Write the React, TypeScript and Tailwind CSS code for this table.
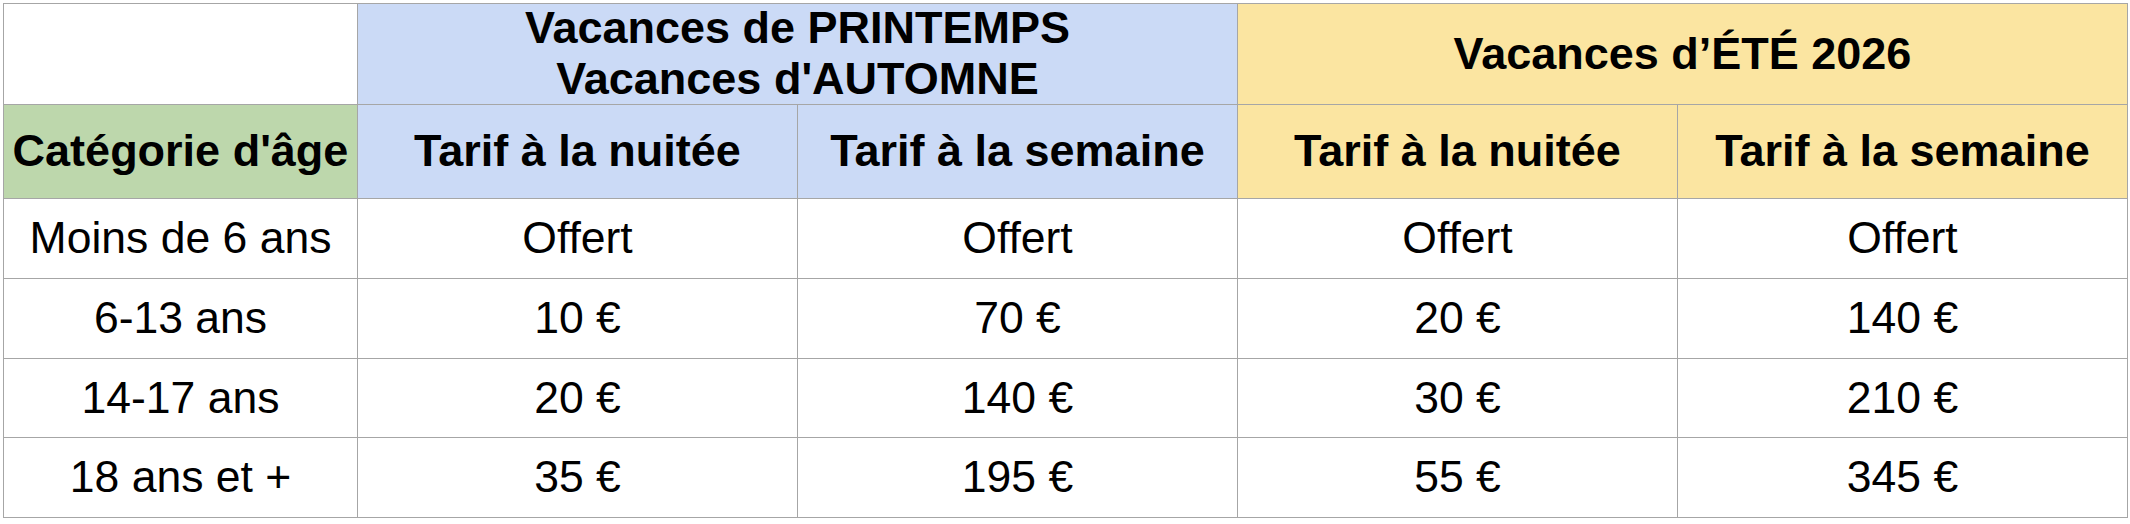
import React from "react";

interface PriceRow {
  age: string;
  springNight: string;
  springWeek: string;
  summerNight: string;
  summerWeek: string;
}

const rows: PriceRow[] = [
  { age: "Moins de 6 ans", springNight: "Offert", springWeek: "Offert", summerNight: "Offert", summerWeek: "Offert" },
  { age: "6-13 ans", springNight: "10 €", springWeek: "70 €", summerNight: "20 €", summerWeek: "140 €" },
  { age: "14-17 ans", springNight: "20 €", springWeek: "140 €", summerNight: "30 €", summerWeek: "210 €" },
  { age: "18 ans et +", springNight: "35 €", springWeek: "195 €", summerNight: "55 €", summerWeek: "345 €" },
];

// hauteurs intérieures des lignes de données
const rowHeights = ["h-[79px]", "h-[79px]", "h-[78px]", "h-[79px]"];

const cell = "flex items-center justify-center text-center";
const head = `${cell} text-[45px] font-bold`;

export default function App() {
  return (
    <div className="min-h-screen bg-white p-[3px] font-['Liberation_Sans',Arial,sans-serif] text-black">
      <div className="grid w-fit grid-cols-[353px_439px_439px_439px_449px] gap-px bg-[#a6a6a6] p-px text-[44.5px] leading-[1.13]">
        {/* en-tête : périodes */}
        <div className="h-[100px] bg-white" />
        <div className={`${head} col-span-2 h-[100px] bg-[#cbdaf6]`}>
          <div>
            Vacances de PRINTEMPS
            <br />
            Vacances d'AUTOMNE
          </div>
        </div>
        <div className={`${head} col-span-2 h-[100px] bg-[#fbe5a1]`}>
          Vacances d’ÉTÉ 2026
        </div>

        {/* en-tête : tarifs */}
        <div className={`${head} h-[93px] bg-[#bdd7ac]`}>Catégorie d'âge</div>
        <div className={`${head} bg-[#cbdaf6]`}>Tarif à la nuitée</div>
        <div className={`${head} bg-[#cbdaf6]`}>Tarif à la semaine</div>
        <div className={`${head} bg-[#fbe5a1]`}>Tarif à la nuitée</div>
        <div className={`${head} bg-[#fbe5a1]`}>Tarif à la semaine</div>

        {rows.map((row, i) => (
          <React.Fragment key={row.age}>
            <div className={`${cell} ${rowHeights[i]} bg-white`}>{row.age}</div>
            <div className={`${cell} bg-white`}>{row.springNight}</div>
            <div className={`${cell} bg-white`}>{row.springWeek}</div>
            <div className={`${cell} bg-white`}>{row.summerNight}</div>
            <div className={`${cell} bg-white`}>{row.summerWeek}</div>
          </React.Fragment>
        ))}
      </div>
    </div>
  );
}
